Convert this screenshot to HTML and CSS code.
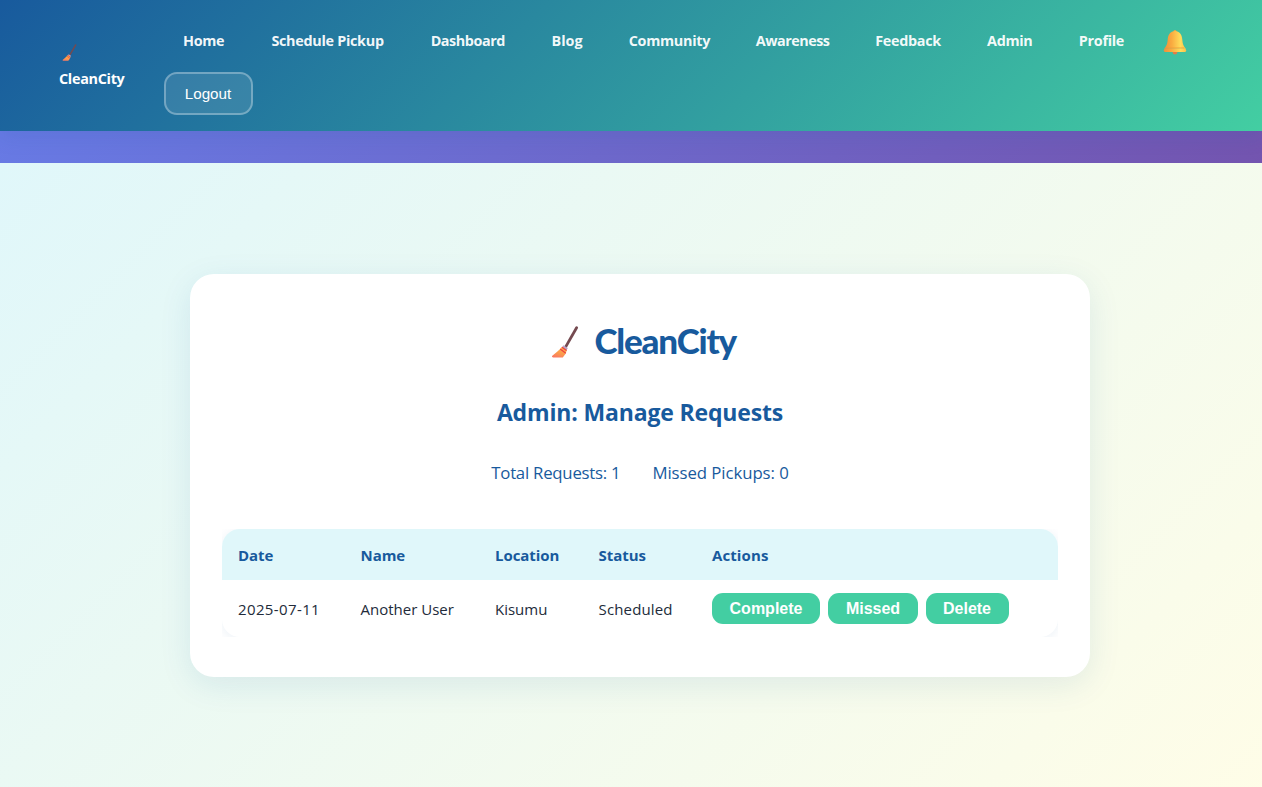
FILE: index.html
```
<!DOCTYPE html>
<html lang="en">
<head>
<meta charset="utf-8">
<title>CleanCity</title>
<link rel="stylesheet" href="styles.css">
</head>
<body>
<svg width="0" height="0" class="defs" aria-hidden="true">
  <defs>
    <linearGradient id="straw" x1="0.7" y1="0" x2="0.3" y2="1">
      <stop offset="0" stop-color="#fdb44b"/><stop offset="0.6" stop-color="#fb9a4d"/><stop offset="1" stop-color="#fa7a62"/>
    </linearGradient>
    <linearGradient id="brass" x1="0" y1="0" x2="1" y2="0">
      <stop offset="0" stop-color="#ef8f3c"/><stop offset="0.35" stop-color="#f9ab40"/><stop offset="0.75" stop-color="#ffdc5a"/><stop offset="1" stop-color="#fbc04a"/>
    </linearGradient>
    <symbol id="broom" viewBox="0 0 28 32">
      <path d="M25.6 1.8 14.8 20.6" stroke="#754a50" stroke-width="2.8" stroke-linecap="round"/>
      <path d="M12.4 19.2 16.8 22 15.4 24.6 10.8 21.6Z" fill="#b9a3c4"/>
      <path d="M11 20.8C8.5 24 4.6 27.4 1 30Q.6 31.4 2.2 31.4L11.8 31.4Q14.8 28.6 15.8 24.4Z" fill="url(#straw)"/>
      <path d="M9.2 23 14.8 27.2M11 21.2 15.6 24.6" stroke="#ee4140" stroke-width="1.3"/>
    </symbol>
    <symbol id="bell" viewBox="0 0 24 26">
      <circle cx="12" cy="23.2" r="2.2" fill="#e77b45"/>
      <circle cx="12" cy="2.4" r="1.5" fill="#f7a83e"/>
      <path d="M12 2C7.4 2 5 5.6 4.7 10.5 4.4 15 3.5 17 1.2 19.6H22.8C20.5 17 19.6 15 19.3 10.5 19 5.6 16.6 2 12 2Z" fill="url(#brass)"/>
      <path d="M1.6 19.2H22.4L23.2 21.6Q23.2 23 22 23H2Q.8 23 .8 21.6Z" fill="url(#brass)"/>
      <path d="M2.8 18.9H21.2" stroke="#f29b38" stroke-width=".7"/>
    </symbol>
  </defs>
</svg>
<header class="site-header">
  <div class="logo"><svg class="logo-broom"><use href="#broom"/></svg><span>CleanCity</span></div>
  <nav class="nav">
    <a class="link home">Home</a>
    <a class="link schedule">Schedule Pickup</a>
    <a class="link dashboard">Dashboard</a>
    <a class="link blog">Blog</a>
    <a class="link community">Community</a>
    <a class="link awareness">Awareness</a>
    <a class="link feedback">Feedback</a>
    <a class="link admin">Admin</a>
    <a class="link profile">Profile</a>
    <a class="bell"><svg class="bell-icon"><use href="#bell"/></svg></a>
    <button class="logout">Logout</button>
  </nav>
</header>
<main class="content">
  <section class="card">
    <div class="brand"><svg class="brand-broom"><use href="#broom"/></svg><span class="brand-name">CleanCity</span></div>
    <h1 class="title">Admin: Manage Requests</h1>
    <div class="stats"><span>Total Requests: 1</span><span class="missed">Missed Pickups: 0</span></div>
    <div class="table-wrap">
      <table class="table">
        <colgroup><col class="c-date"><col class="c-name"><col class="c-loc"><col class="c-status"><col></colgroup>
        <thead><tr><th>Date</th><th>Name</th><th>Location</th><th>Status</th><th class="acts">Actions</th></tr></thead>
        <tbody><tr><td class="date">2025-07-11</td><td>Another User</td><td>Kisumu</td><td class="status">Scheduled</td>
          <td class="last"><div class="actions"><button class="btn complete">Complete</button><button class="btn miss">Missed</button><button class="btn del">Delete</button></div></td></tr></tbody>
      </table>
    </div>
  </section>
</main>
</body>
</html>
```

FILE: styles.css
```
* { box-sizing: border-box; }
html { height: 100%; overflow: hidden; }
body {
  margin: 0;
  height: 787px;
  overflow: hidden;
  display: flex;
  flex-direction: column;
  font-family: "Segoe UI", "Open Sans", sans-serif;
  background: linear-gradient(135deg, #667eea 0%, #764ba2 100%) 0 0 / 100% 480px;
}
.defs { display: block; flex: none; height: 0; }
.site-header {
  flex: none;
  position: relative;
  height: 131px;
  padding: 16px 60px 16px 59px;
  display: flex;
  gap: 40px;
  background: linear-gradient(135deg, #185a9d 0%, #43cea2 100%);
  box-shadow: 0 4px 20px rgba(24, 90, 157, .15);
}
.logo {
  width: 65px;
  flex: none;
  padding-top: 28px;
  color: #fff;
  font-size: 14.4px;
  font-weight: 700;
  letter-spacing: -.3px;
  line-height: 25px;
  white-space: nowrap;
}
.logo-broom { display: block; width: 15px; height: 17px; margin: 0 0 5px 3px; }
.nav { display: flex; flex-wrap: wrap; align-content: flex-start; gap: 6px 8px; flex: 1; }
.link {
  height: 50px;
  display: flex;
  justify-content: center;
  align-items: center;
  padding: 0 1px 2px 0;
  color: rgba(255, 255, 255, .95);
  font-size: 14.4px;
  font-weight: 700;
  letter-spacing: -.3px;
  white-space: nowrap;
}
.home { width: 80.3px; }
.schedule { width: 151.5px; }
.dashboard { width: 113px; letter-spacing: -.45px; }
.blog { width: 69.6px; letter-spacing: 0; }
.community { width: 119px; }
.awareness { width: 111.4px; letter-spacing: -.5px; }
.feedback { width: 103.5px; }
.admin { width: 84px; }
.profile { width: 83.3px; }
.bell { height: 50px; width: 46px; display: flex; align-items: center; justify-content: center; }
.bell-icon { width: 24px; height: 26px; margin-top: 1px; }
.logout {
  width: 89px;
  height: 43px;
  border: 2px solid rgba(255, 255, 255, .3);
  border-radius: 13px;
  background: rgba(255, 255, 255, .1);
  color: #fff;
  font: 400 15.2px "Liberation Sans", Arial, sans-serif;
  padding: 0 1px 0 0;
}
.content {
  margin-top: 32px;
  flex: 1;
  padding: 111px 0 0 190px;
  background: linear-gradient(135deg, #e0f7fa 0%, #fffde7 100%) 0 0 / 100% 655px;
}
.card {
  width: 900px;
  height: 403px;
  padding: 40px 32px;
  border-radius: 24px;
  background: #fff;
  box-shadow: 0 8px 32px rgba(24, 90, 157, .1);
}
.brand {
  height: 56px;
  padding-left: 12px;
  display: flex;
  justify-content: center;
  align-items: center;
  gap: 16px;
  color: #185a9d;
}
.brand-broom { width: 28px; height: 32px; }
.brand-name {
  width: 147px;
  padding-bottom: 4px;
  font: 900 35px/52px Lato, sans-serif;
  letter-spacing: -1.2px;
  white-space: nowrap;
}
.title {
  margin: 23px 0 0;
  text-align: center;
  color: #185a9d;
  font-size: 23px;
  line-height: 38px;
  letter-spacing: -.16px;
}
.stats {
  margin-top: 27px;
  display: flex;
  justify-content: center;
  gap: 32px;
  color: #185a9d;
  font-size: 16.8px;
  line-height: 30px;
  letter-spacing: -.25px;
}
.missed { letter-spacing: -.07px; }
.table-wrap { margin-top: 41px; height: 108px; overflow: hidden; }
.table {
  width: 100%;
  table-layout: fixed;
  border-collapse: collapse;
  border-radius: 18px;
  overflow: hidden;
  background: #fff;
  box-shadow: 0 2px 12px rgba(24, 90, 157, .08);
  font-size: 15px;
  color: #222b3a;
}
.c-date { width: 122.5px; }
.c-name { width: 134.5px; }
.c-loc { width: 103.5px; }
.c-status { width: 113.5px; }
th, td { padding: 0 16px; text-align: left; white-space: nowrap; }
th { height: 51px; background: #e0f7fa; color: #185a9d; font-weight: 700; letter-spacing: -.05px; }
.acts { letter-spacing: .1px; }
td { height: 57px; }
.date { letter-spacing: .38px; }
.status { letter-spacing: .15px; }
.actions { display: flex; gap: 8px; }
.btn {
  height: 31px;
  padding: 0;
  border: 0;
  border-radius: 11px;
  background: #43cea2;
  color: #fff;
  font: 700 16px "Liberation Sans", Arial, sans-serif;
}
.complete { width: 108px; }
.miss { width: 90px; }
.del { width: 83px; padding-right: 1px; }
```
